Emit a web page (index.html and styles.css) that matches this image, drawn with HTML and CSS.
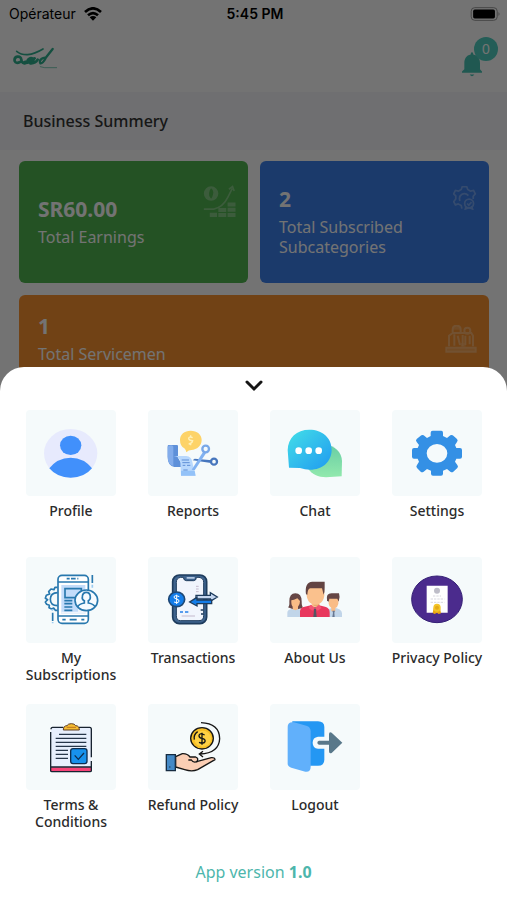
FILE: index.html
```html
<!DOCTYPE html>
<html lang="en">
<head>
<meta charset="utf-8">
<meta name="viewport" content="width=device-width, initial-scale=1">
<title>Dashboard</title>
<link rel="stylesheet" href="styles.css">
</head>
<body>
<div class="page">
  <div class="status">
    <div class="carrier">Opérateur
      <svg class="wifi" viewBox="0 0 54 42" aria-hidden="true"><g fill="none" stroke="#000" stroke-width="8"><path d="M3 15Q27-7 51 15"/><path d="M12 25Q27 12 42 25"/></g><path d="M17 31Q27 23 37 31L27 41Z"/></svg>
    </div>
    <div class="clock">5:45 PM</div>
    <div class="power">
      <svg class="battery" viewBox="649 18 92 43" aria-hidden="true"><rect x="651" y="20" width="80" height="39" rx="11" fill="none" stroke="#999" stroke-width="3"/><rect x="657" y="26" width="67" height="27" rx="5"/><path d="M735 33q6 6 0 13z" fill="#999"/></svg>
    </div>
  </div>
  <header class="topbar">
    <svg class="logo" viewBox="39 142 132 66" aria-hidden="true"><g fill="none" stroke="#2fb08f" stroke-linecap="round" stroke-linejoin="round"><path stroke-width="5" d="M50 155Q64 166 83 165Q104 163 129 148"/><path stroke-width="7" d="M158 148L139 172Q128 193 121 191Q117 183 124 178Q130 173 138 174"/><path stroke-width="8" d="M60 187Q48 193 44 184Q42 173 52 171Q63 170 64 181Q66 192 76 190Q88 190 104 176M84 180Q94 171 100 179Q101 188 91 191Q106 192 113 180"/><path stroke-width="11" d="M74 189Q88 187 99 179"/><path stroke-width="3" opacity=".6" d="M121 201L134 204L170 204"/></g></svg>
    <button class="bell" type="button" aria-label="Notifications">
      <svg viewBox="622 160 60 74" aria-hidden="true"><path fill="#48c4b4" d="M652 160q4 0 4 7c14 3 20 12 20 26v18l6 7v4h-60v-4l7-7v-18c0-14 6-23 19-26q0-7 4-7zM645 227h14q-7 11-14 0z"/></svg>
      <span class="badge">0</span>
    </button>
  </header>
  <h1 class="heading">Business Summery</h1>
  <main class="cards">
    <article class="card green">
      <div><strong>SR60.00</strong><p>Total Earnings</p></div>
      <svg class="deco earn" viewBox="610 104 99 100" aria-hidden="true"><g fill="none" stroke="#fff" stroke-width="5"><path d="M612 177h30q28-5 43-36l13-26M688 117l11-8 5 13"/></g><path fill="#fff" fill-rule="evenodd" d="M634 108a22 22 0 1 0 0 44a22 22 0 1 0 0-44zM634 114q9 8 6 18q-2 10-6 14q-8-8-6-18q1-9 6-14zM630 188h22v13h-22zM656 174h24v12h-24zM656 189h24v12h-24zM684 157h24v12h-24zM684 173h24v12h-24zM684 189h24v12h-24z"/></svg>
    </article>
    <article class="card blue">
      <div><strong>2</strong><p>Total Subscribed Subcategories</p></div>
      <svg class="deco gear" viewBox="597 109 70 70" aria-hidden="true"><g fill="none" stroke="#fff" stroke-width="5"><path d="M623 175l-2-9-9-5-8 3-5-9 6-8v-9l-6-6 5-10 9 2 8-5 3-8h13l3 8 8 5 9-2 5 10-6 7v8M617 153q-4-13 5-19 11-7 20 3"/><circle cx="644" cy="160" r="13"/><path d="M638 160l5 5 8-9M635 168l-2 8 11-4 10 4-3-9"/></g></svg>
    </article>
    <article class="card orange">
      <div><strong>1</strong><p>Total Servicemen</p></div>
      <svg class="deco crew" viewBox="571 516 96 84" aria-hidden="true"><g fill="none" stroke="#fff" stroke-width="6"><path d="M594 530q0-12 12-12t12 12v10h-24zM583 580v-32l11-8h56l5 8v32M624 580v-34M575 584h88v12h-88zM599 544v34M609 548l7 28M632 548v28M645 548v26"/><circle cx="638" cy="533" r="9"/></g><path fill="#fff" opacity=".6" d="M578 582h84v13h-84zM592 521h25v9h-25zM618 570h15v11h-15z"/></svg>
    </article>
  </main>
</div>
<div class="backdrop"></div>
<section class="sheet" aria-label="Menu">
  <button class="close" type="button" aria-label="Close menu">
    <svg viewBox="0 0 18 12" aria-hidden="true"><path d="M2 2l7 7 7-7" fill="none" stroke="#151515" stroke-width="3" stroke-linecap="round"/></svg>
  </button>
  <nav class="grid">
    <a href="#profile"><svg viewBox="49 30 270 258" aria-hidden="true"><ellipse cx="183" cy="160" rx="80" ry="73" fill="#e7eafd"/><ellipse cx="183" cy="136" rx="32" ry="29" fill="#4190fb"/><path d="M119 205Q142 174 183 173Q224 174 247 205Q224 233 183 233Q142 233 119 205Z" fill="#4190fb"/></svg><span>Profile</span></a>
    <a href="#reports"><svg viewBox="415 30 270 258" aria-hidden="true"><path d="M474 138q0-3 4-3h24q3 0 3 4v34l16 28h-27q-20-4-20-30z" fill="#5e90d9"/><path d="M474 140q12-8 17 0v58q-17-5-17-28z" fill="#82aceb"/><path d="M492 168h38q15 1 18 18l9 41h-43l-2-41q-2-16-20-18z" fill="#b8d8fd"/><path d="M514 212h41l3 15h-44z" fill="#93c2f8"/><g stroke="#5e8fd6" stroke-width="3"><path d="M516 180h22M518 188h22M519 196h8M532 196h10M521 210h13"/></g><path d="M549 181l6-5 52 5-3 8z" fill="#4776bd"/><path d="M546 209l34-53 9 4-34 51z" fill="#82b2f1"/><g fill="none" stroke-width="7"><circle cx="588" cy="147" r="10" stroke="#79a8e8"/><circle cx="613" cy="185" r="9" stroke="#4776bd"/></g><path d="M543 92c19 0 33 11 33 28s-14 29-31 30q-8 0-15 7-1-8-6-12-13-7-13-25c0-17 13-28 32-28z" fill="#fdd368"/><path d="M549 113q-12-5-12 3 1 6 12 6-1 8-12 10M543 106v5M543 130v6" fill="none" stroke="#fff1b9" stroke-width="4"/></svg><span>Reports</span></a>
    <a href="#chat"><svg viewBox="46 30 270 258" aria-hidden="true"><defs><linearGradient id="cb" x1="0" y1="0" x2="1" y2="1"><stop stop-color="#43dfe8"/><stop offset="1" stop-color="#209af0"/></linearGradient><linearGradient id="cg" x1="0" y1="0" x2="0" y2="1"><stop stop-color="#68cda4"/><stop offset="1" stop-color="#92e9ad"/></linearGradient></defs><path d="M210 134c30 2 51 21 52 49l-1 46-47 3c-24 0-42-9-55-27z" fill="url(#cg)"/><path d="M164 89c39 0 67 24 67 60 0 35-27 60-65 60q-15 0-30-5l-33-1-4-53c1-37 27-61 65-61z" fill="url(#cb)"/><g fill="#fff"><circle cx="132" cy="152" r="10"/><circle cx="162" cy="152" r="10"/><circle cx="192" cy="152" r="10"/></g></svg><span>Chat</span></a>
    <a href="#settings"><svg viewBox="411 30 270 258" aria-hidden="true"><path fill-rule="evenodd" fill="#3490e5" d="M533 92h26q5 0 5 6v10l12 6 10-8q5-3 9 1l11 10q4 4 0 9l-6 9 4 9h11q6 0 6 6v20q0 6-6 6h-11l-4 9 7 10q4 5 0 9l-12 11q-4 3-9 0l-10-8-12 5v9q0 6-6 6h-24q-6 0-6-6v-9l-12-5-10 8q-5 3-9 0l-11-11q-4-4 0-9l6-10-4-9h-11q-6 0-6-6v-20q0-6 6-6h11l4-9-7-9q-4-5 0-9l12-10q4-4 9-1l10 8 11-6v-10q0-6 6-6zM546 132a31 28 0 1 0 0 56a31 28 0 1 0 0-56z"/></svg><span>Settings</span></a>
    <a href="#subscriptions"><svg viewBox="48 38 270 258" aria-hidden="true"><g fill="none" stroke="#2878ae" stroke-width="5" stroke-linejoin="round"><path d="M143 129h-8l-3 7-9-2-7 8 3 7-10 4-3 9 7 4-7 7 4 7 8 3-1 7 8 4 6-3 5 7h7" /><path d="M143 145q-22 1-22 20t22 19"/><rect x="144" y="93" width="91" height="144" rx="12" fill="#fff"/><path d="M144 113h91M144 215h91"/><path d="M170 103h9M183 103h14M202 103h3M157 226h10M179 226h21M214 226h9"/></g><path d="M154 122h72v86h-72z" fill="#c3dcfa"/><path d="M204 193l22 7v8h-72v-6h50z" fill="#eef5fd"/><g fill="none" stroke="#2878ae" stroke-width="5"><path d="M165 133h49v27h-49zM163 169h24M163 178h24M163 188h24M163 198h24"/><ellipse cx="229" cy="168" rx="34" ry="31" fill="#f6fbff"/><path d="M203 188q3-9 20-12v-7q-8-3-6-12 1-13 12-13t12 13q1 9-6 12v7q17 3 20 12M247 92v24M128 205v25" /><path d="M247 121v9M127 194v5M128 233v4" stroke="#9acaf1"/></g></svg><span>My Subscriptions</span></a>
    <a href="#transactions"><svg viewBox="414 38 270 258" aria-hidden="true"><rect x="488" y="92" width="102" height="146" rx="20" fill="#3e638e" stroke="#1e3c5d" stroke-width="5"/><path d="M512 99h8q1 10 9 10h22q8 0 8-10h8q14 2 14 15v100q0 15-14 15h-55q-13 0-13-15v-100q0-13 13-15z" fill="#f1f5fd" stroke="#1e3c5d" stroke-width="3"/><path d="M530 98h24v5h-24z" fill="#b3c8e3"/><path d="M558 126h8M558 134h8M558 142h8M515 215h40" stroke="#c4b9cd" stroke-width="3"/><path d="M510 203h9M525 203h10" stroke="#267fe8" stroke-width="5"/><path d="M572 197h8M573 209h7" stroke="#1e3c5d" stroke-width="4"/><ellipse cx="500" cy="165" rx="24" ry="22" fill="#137ce9" stroke="#1e4774" stroke-width="5"/><path d="M508 157q-15-6-16 1 0 5 8 6 9 2 7 8-4 6-15 1M500 151v28" fill="none" stroke="#fff" stroke-width="3"/><path d="M558 153h43v-8l21 13-21 13v-7h-43z" fill="#c4d6ef" stroke="#1e3c5d" stroke-width="4"/><path d="M605 167h-44v-8l-22 14 22 12v-7h44z" fill="#147de9" stroke="#1e3c5d" stroke-width="4"/></svg><span>Transactions</span></a>
    <a href="#about"><svg viewBox="46 38 270 258" aria-hidden="true"><path d="M98 218v-12q0-9 10-11l14-4 16 5v22zM216 218v-22l18-6q28 2 28 17v11z" fill="#c1d5e9"/><path d="M100 189q5-3 4-18 0-24 18-24 19 0 19 24 0 15 4 18-6 5-14 5h-18z" fill="#664645"/><path d="M110 168q7 0 18-6l8 8q0 12-6 17v8q-8 5-16 0v-8q-5-5-4-19zM222 166q2-8 14-8t15 6v14q-2 10-9 13v10h-12v-10q-7-4-8-13z" fill="#f9bc86"/><path d="M217 169q-4-23 15-22h21q4 11-1 25l-4-9h-24l-2 9z" fill="#664645"/><path d="M233 199h8l-2 6 1 13h-7l2-13z" fill="#687791"/><path d="M136 218v-17q0-12 14-14l25-6h12l24 6q14 3 14 17v14z" fill="#e8375d"/><path d="M157 135l8-13h36l8 12v20q-3 18-15 24v12q-10 7-23 0v-12q-13-7-15-24z" fill="#fac18d"/><path d="M194 178q-7 5-20 3 8 8 20 3z" fill="#eaa86f"/><path d="M154 150q-5-36 19-38h37v18q0 13-3 21l-5-19h-35q-8 1-9 19z" fill="#624342"/><path d="M174 189h14l-4 8 2 21h-10l2-21z" fill="#555463"/><path d="M168 181l-6 10 11 8 8-7 8 7 12-8-8-10-12 9z" fill="#f35473"/></svg><span>About Us</span></a>
    <a href="#privacy"><svg viewBox="411 38 270 258" aria-hidden="true"><ellipse cx="546" cy="165" rx="76" ry="70" fill="#4b2b8d" stroke="#352075" stroke-width="3"/><path d="M515 124h63v81h-63z" fill="#fff"/><circle cx="546" cy="139" r="9" fill="#bebdc8"/><path d="M534 155h24M527 164h41M527 174h41" stroke="#c4c3ce" stroke-width="2" stroke-dasharray="7 3"/><path d="M536 190h19l3 17-7 2-5-4-7 4-6-3z" fill="#eba70f"/><ellipse cx="546" cy="190" rx="11" ry="12" fill="#f4c528"/><circle cx="546" cy="190" r="6" fill="#e3aa19"/></svg><span>Privacy Policy</span></a>
    <a href="#terms"><svg viewBox="48 26 270 258" aria-hidden="true"><path d="M123 96h120v131h-120z" fill="#e7effd"/><path d="M123 216h120v12h-120z" fill="#f64378"/><path d="M160 96h-32q-5 0-5 6M122 110v116q0 3 4 3h114q4 0 4-3v-29M207 96h32q5 0 5 6v84M122 215h121" fill="none" stroke="#182330" stroke-width="4"/><path d="M160 104q0-13 11-13 3-6 13-6t13 6q11 0 11 13z" fill="#f6bd32" stroke="#5e3c22" stroke-width="3"/><path d="M170 96h28" stroke="#c88222" stroke-width="4"/><path d="M147 117h82M137 129h92M137 141h92M137 153h92M137 165h37M137 177h37M137 189h37" stroke="#27364a" stroke-width="4"/><rect x="182" y="160" width="49" height="45" rx="7" fill="#1791ec" stroke="#0e2e50" stroke-width="4"/><path d="M194 180l11 12 17-19" fill="none" stroke="#0e2e50" stroke-width="4"/></svg><span>Terms &amp; Conditions</span></a>
    <a href="#refund"><svg viewBox="414 26 270 258" aria-hidden="true"><path d="M573 82q55 2 56 48-2 43-59 46M579 168l-11 8 11 9" fill="none" stroke="#171717" stroke-width="4"/><ellipse cx="576" cy="129" rx="34" ry="32" fill="#f8bf25" stroke="#171717" stroke-width="4"/><ellipse cx="578" cy="130" rx="25" ry="24" fill="#ffd144"/><path d="M584 119q-16-8-17 2 0 7 9 8 11 2 9 10-4 8-18 2M576 112v36M553 133q-3-15 10-24" fill="none" stroke="#171717" stroke-width="4"/><path d="M497 184l20-9q15-1 23 10h17q11 5 3 14l44-12q11-1 11 6l-52 30q-17 7-39 0l-27-8z" fill="#fbceb4" stroke="#171717" stroke-width="4" stroke-linejoin="round"/><path d="M535 194h9q6 10 19 4" fill="none" stroke="#171717" stroke-width="4"/><path d="M469 178h27v48h-27z" fill="#4489c6" stroke="#172c41" stroke-width="4"/><path d="M478 215h3" stroke="#183957" stroke-width="4"/></svg><span>Refund Policy</span></a>
    <a href="#logout"><svg viewBox="45 26 270 258" aria-hidden="true"><path d="M112 78h77q19 1 19 17v98q0 18-19 18h-77z" fill="#2497f3"/><path d="M210 124h-21q-16 2-16 18t16 18h21z" fill="#f4fafc"/><path d="M98 95q0-17 19-14l37 10q13 4 13 17v106q0 17-16 15l-42-12q-11-4-11-12z" fill="#61b0fb"/><path d="M192 136h30v-19q0-9 8-5l32 30-32 31q-8 3-8-5v-20h-30q-5-1-5-6t5-6z" fill="#59788a"/></svg><span>Logout</span></a>
  </nav>
  <footer class="version">App version <b>1.0</b></footer>
</section>
</body>
</html>
```

FILE: styles.css
```css
* { box-sizing: border-box; }

body {
  margin: 0;
  min-height: 100vh;
  overflow: hidden;
  background: #fff;
  color: #333;
  font-family: "Noto Sans", "Open Sans", sans-serif;
}

button { padding: 0; border: 0; background: none; cursor: pointer; }
svg { display: block; }

.status {
  display: grid;
  grid-template-columns: 1fr auto 1fr;
  align-items: center;
  height: 28px;
  padding: 0 6px 0 9px;
  color: #000;
  font: 14px/20px Inter, sans-serif;
}
.carrier { display: flex; align-items: center; gap: 8px; }
.wifi { width: 18px; height: 14px; }
.clock { font-weight: 600; }
.power { display: flex; justify-content: flex-end; }
.battery { width: 31px; height: 14px; }

.topbar {
  display: flex;
  justify-content: space-between;
  align-items: center;
  height: 64px;
  padding: 0 25px 4px 13px;
}
.logo { width: 44px; height: 22px; }
.bell { position: relative; padding-top: 12px; }
.bell svg { width: 20px; height: 25px; }
.badge {
  position: absolute;
  top: -3px;
  left: 12px;
  width: 24px;
  height: 24px;
  border-radius: 50%;
  background: #50cfc0;
  color: #fff;
  font-size: 14px;
  line-height: 24px;
}

.heading {
  margin: 0;
  padding: 17px 23px;
  background: #f6f7fa;
  font-size: 16px;
  line-height: 24px;
  font-weight: 500;
}

.cards {
  display: grid;
  grid-template-columns: 1fr 1fr;
  gap: 12px;
  padding: 11px 18px 0 19px;
}
.card {
  display: flex;
  align-items: center;
  justify-content: space-between;
  min-height: 122px;
  padding: 19px 12px 19px 19px;
  border-radius: 6px;
  color: #fff;
}
.card strong { display: block; margin-bottom: 6px; font-size: 21px; line-height: 24px; font-weight: 700; }
.card p { margin: 0; font-size: 16px; line-height: 20px; }
.green { background: #50b650; }
.blue { background: #3c81ee; }
.orange { grid-column: 1 / -1; min-height: 88px; background: #fb932f; }
.deco { flex: none; opacity: .3; }
.earn { width: 33px; height: 33px; margin-bottom: 42px; }
.gear { width: 24px; height: 24px; margin-bottom: 48px; }
.crew { width: 32px; height: 28px; }

.backdrop { position: fixed; inset: 0; background: rgba(0, 0, 0, .55); }

.sheet {
  position: fixed;
  right: 0;
  bottom: 0;
  left: 0;
  border-radius: 24px 24px 0 0;
  background: #fff;
}
.close { display: flex; justify-content: center; width: 100%; padding: 13px 0 18px; }
.close svg { width: 18px; height: 12px; }

.grid {
  display: grid;
  grid-template-columns: repeat(4, 1fr);
  grid-auto-rows: minmax(126px, auto);
  gap: 21px 0;
  padding: 0 9px 0 10px;
}
.grid a {
  display: flex;
  flex-direction: column;
  align-items: center;
  gap: 6px;
  padding: 0 10px;
  color: #2b2b2b;
  font-size: 14px;
  line-height: 17px;
  font-weight: 500;
  text-align: center;
  text-decoration: none;
}
.grid svg { width: 90px; height: 86px; border-radius: 4px; background: #f5fafb; }

.version {
  margin-top: 30px;
  padding-bottom: 16px;
  color: #4db6ac;
  font-size: 16px;
  line-height: 24px;
  text-align: center;
}
```
